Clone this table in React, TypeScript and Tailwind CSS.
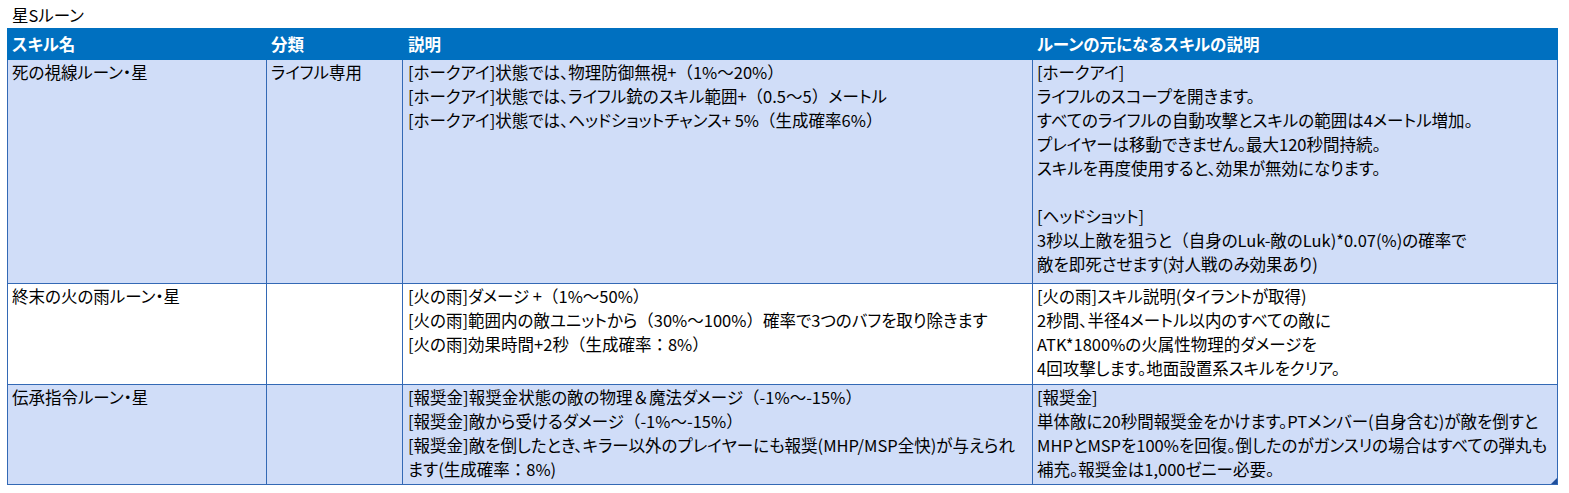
const rows = [
  {
    name: '死の視線ルーン・星',
    kind: 'ライフル専用',
    fill: true,
    h: 'h-[224px]',
    desc: [
      '[ホークアイ]状態では、物理防御無視+（1%～20%）',
      '[ホークアイ]状態では、ライフル銃のスキル範囲+（0.5～5）メートル',
      '[ホークアイ]状態では、ヘッドショットチャンス+ 5%（生成確率6%）',
    ],
    base: [
      '[ホークアイ]',
      'ライフルのスコープを開きます。',
      'すべてのライフルの自動攻撃とスキルの範囲は4メートル増加。',
      'プレイヤーは移動できません。最大120秒間持続。',
      'スキルを再度使用すると、効果が無効になります。',
      '',
      '[ヘッドショット]',
      '3秒以上敵を狙うと（自身のLuk-敵のLuk)*0.07(%)の確率で',
      '敵を即死させます(対人戦のみ効果あり)',
    ],
  },
  {
    name: '終末の火の雨ルーン・星',
    kind: '',
    fill: false,
    h: 'h-[101px]',
    desc: [
      '[火の雨]ダメージ +（1%～50%）',
      '[火の雨]範囲内の敵ユニットから（30%～100%）確率で3つのバフを取り除きます',
      '[火の雨]効果時間+2秒（生成確率：8%）',
    ],
    base: [
      '[火の雨]スキル説明(タイラントが取得)',
      '2秒間、半径4メートル以内のすべての敵に',
      'ATK*1800%の火属性物理的ダメージを',
      '4回攻撃します。地面設置系スキルをクリア。',
    ],
  },
  {
    name: '伝承指令ルーン・星',
    kind: '',
    fill: true,
    h: 'h-[100px]',
    desc: [
      '[報奨金]報奨金状態の敵の物理＆魔法ダメージ（-1%～-15%）',
      '[報奨金]敵から受けるダメージ（-1%～-15%）',
      '[報奨金]敵を倒したとき、キラー以外のプレイヤーにも報奨(MHP/MSP全快)が与えられ',
      'ます(生成確率：8%)',
    ],
    base: [
      '[報奨金]',
      '単体敵に20秒間報奨金をかけます。PTメンバー(自身含む)が敵を倒すと',
      'MHPとMSPを100%を回復。倒したのがガンスリの場合はすべての弾丸も',
      '補充。報奨金は1,000ゼニー必要。',
    ],
  },
];

// full-width brackets etc. keep their full width, the rest is set proportional
function Text({ t }: { t: string }) {
  const parts = t.split(/([（）：＆])/);
  return (
    <>
      {parts.map((p, i) =>
        /^[（）：＆]$/.test(p) ? (
          <span key={i} className="[font-feature-settings:normal]">
            {p}
          </span>
        ) : (
          p
        ),
      )}
    </>
  );
}

function Lines({ items }: { items: string[] }) {
  return (
    <>
      {items.map((t, i) => (
        <div key={i} className="h-[24px] whitespace-nowrap">
          {t ? <Text t={t} /> : '\u00a0'}
        </div>
      ))}
    </>
  );
}

export default function App() {
  return (
    <div
      className="w-[1569px] h-[493px] bg-white text-black text-[16.5px] leading-[24px] pl-[7px] [font-feature-settings:'palt']"
      style={{ fontFamily: '"Noto Sans CJK JP", "Noto Sans", sans-serif' }}
    >
      <div className="h-[28px] pt-[4px] pl-[5px] leading-[22px]">星Sルーン</div>

      <div className="relative w-[1551px]">
        {/* header */}
        <div className="flex h-[32px] items-center bg-[#0070C0] text-white font-bold">
          <div className="w-[260px] pl-[5px]">スキル名</div>
          <div className="w-[136px] pl-[4px]">分類</div>
          <div className="w-[630px] pl-[5px]">説明</div>
          <div className="w-[525px] pl-[4px]">ルーンの元になるスキルの説明</div>
        </div>

        {/* body */}
        <div className="border-l border-[#3369B5]">
          {rows.map((r) => (
            <div
              key={r.name}
              className={`flex ${r.h} border-b border-[#3369B5] ${r.fill ? 'bg-[#D0DDF8]' : 'bg-white'}`}
            >
              <div className="w-[259px] border-r border-[#3369B5] px-[4px] overflow-hidden">
                <div className="h-[24px] whitespace-nowrap">{r.name}</div>
              </div>
              <div className="w-[136px] border-r border-[#3369B5] px-[4px] overflow-hidden">
                <div className="h-[24px] whitespace-nowrap">{r.kind}</div>
              </div>
              <div className="w-[630px] border-r border-[#3369B5] pl-[5px]">
                <Lines items={r.desc} />
              </div>
              <div className="w-[525px] border-r border-[#3369B5] pl-[4px] overflow-hidden">
                <Lines items={r.base} />
              </div>
            </div>
          ))}
        </div>

        {/* table resize handle */}
        <svg className="absolute right-[1px] bottom-[1px]" width="6" height="6" viewBox="0 0 6 6">
          <polygon points="6,0 6,6 0,6" fill="#1F4E9A" />
        </svg>
      </div>
    </div>
  );
}
